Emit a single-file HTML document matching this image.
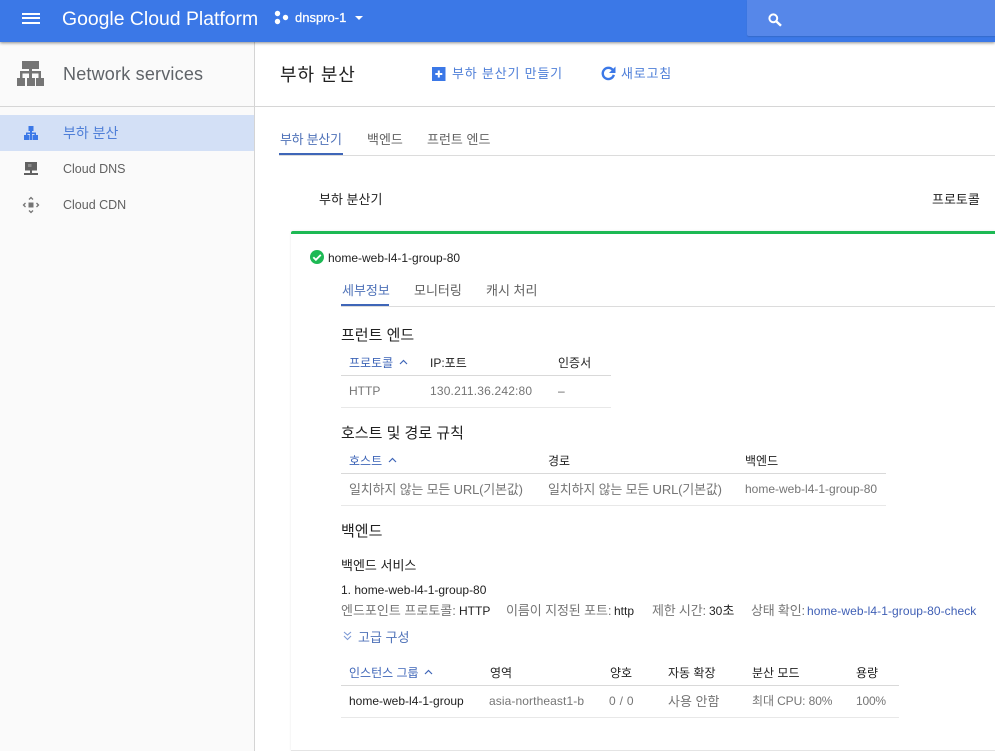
<!DOCTYPE html>
<html lang="ko"><head><meta charset="utf-8"><title>Network services</title>
<style>
html,body{margin:0;padding:0;background:#fff}
#p{position:relative;width:995px;height:751px;overflow:hidden;background:#fff;font-family:"Liberation Sans","Noto Sans CJK KR",sans-serif;font-size:12px;color:#757575}
.t{position:absolute;white-space:nowrap;line-height:16px}
.r{position:absolute}
.k{color:#212121}.b{color:#3f66b8}
.h{font-size:13px}
.s{font-size:15px}
.th{font-size:12px}
.v{font-size:12px}
svg{position:absolute;display:block}
</style></head><body><div id="p">
<div class="r" style="left:0;top:107px;width:254px;height:644px;background:#fafafa"></div>
<div class="r" style="left:0;top:42px;width:254px;height:65px;background:#fafafa"></div>
<div class="r" style="left:254px;top:42px;width:1px;height:709px;background:#d4d4d4"></div>
<div class="r" style="left:0;top:106px;width:995px;height:1px;background:#d6d6d6"></div>
<div class="r" style="left:0;top:115px;width:254px;height:36px;background:#d3e0f6"></div>

<div class="r" style="left:0;top:0;width:995px;height:42px;background:#3b78e7;box-shadow:0 1px 3px rgba(0,0,0,.45)"></div>
<div class="r" style="left:747px;top:0;width:248px;height:36px;background:#5687e9;border-radius:0 0 0 2px;box-shadow:0 1px 1px rgba(0,0,0,.12)"></div>
<div class="r" style="left:22px;top:13px;width:18px;height:2px;background:#fff"></div>
<div class="r" style="left:22px;top:17px;width:18px;height:2px;background:#fff"></div>
<div class="r" style="left:22px;top:22px;width:18px;height:2px;background:#fff"></div>
<div class="t" style="left:62px;top:8px;font-size:19.4px;line-height:22px;color:#fff">Google Cloud Platform</div>
<svg style="left:274px;top:10px" width="16" height="16" viewBox="0 0 16 16" fill="#fff"><circle cx="3.5" cy="3.5" r="2.700"/><circle cx="3.5" cy="11.500" r="2.700"/><circle cx="11.500" cy="7.500" r="2.700"/></svg>
<div class="t" style="left:295px;top:10px;font-size:13px;color:#fff;-webkit-text-stroke:.25px #fff">dnspro-1</div>
<svg style="left:354px;top:15px" width="10" height="6" viewBox="0 0 10 6" fill="#fff"><path d="M1 1h8L5 5z"/></svg>
<svg style="left:768px;top:13px" width="15" height="14" viewBox="0 0 15 14" fill="none" stroke="#fff"><circle cx="5.300" cy="5.300" r="3.900" stroke-width="2"/><path d="M8.200 8.200L13 12.800" stroke-width="2.400"/></svg>

<svg style="left:17px;top:61px" width="27" height="25" viewBox="0 0 27 25" fill="#757575"><path d="M5 0h17v8H5zM12 8h3v2h-3zM3 10h21v2.500H3zM3 12.500h2.500V17H3zM12 12.500h3V17h-3zM21.500 12.500H24V17h-2.500zM0 17h8v8H0zM10 17h8v8h-8zM19 17h8v8h-8z"/></svg>
<div class="t" style="left:63px;top:62px;font-size:18px;line-height:24px;color:#5f6368;letter-spacing:.2px">Network services</div>

<svg style="left:24px;top:126px" width="14" height="14" viewBox="0 0 14 14" fill="#3b78e7"><path d="M4.500 0h5v5h-5zM6 5h2v9H6zM2 6.500h10V8H2zM2 8h1.500v1H2zM10.500 8H12v1h-1.500zM0 9h5.500v5H0zM8.500 9H14v5H8.500z"/></svg>
<div class="t" style="left:63px;top:125px;font-size:14px;color:#4f7fd8">부하 분산</div>
<svg style="left:24px;top:162px" width="14" height="14" viewBox="0 0 14 14" fill="#616161"><path d="M1 0h12v8.500H1zM6 8.500h2V11H6zM0 11h14v2H0z"/><path d="M4 2h3.500v3H4z" fill="#8a8a8a"/></svg>
<div class="t" style="left:63px;top:161px;color:#616161;font-size:12.500px">Cloud DNS</div>
<svg style="left:22px;top:196px" width="18" height="18" viewBox="0 0 18 18" fill="none" stroke="#757575" stroke-width="1.300"><rect x="6.500" y="6.500" width="5" height="5" fill="#757575" stroke="none"/><path d="M7 3.500L9 1.500 11 3.500M7 14.500L9 16.500 11 14.500M3.500 7L1.500 9 3.500 11M14.500 7L16.500 9 14.500 11"/></svg>
<div class="t" style="left:63px;top:197px;color:#616161;font-size:12.500px">Cloud CDN</div>

<div class="t" style="left:280px;top:63px;font-size:18px;line-height:24px;color:#212121;letter-spacing:.9px">부하 분산</div>
<svg style="left:432px;top:67px" width="14" height="14" viewBox="0 0 14 14"><rect width="13.500" height="14" fill="#3b78e7"/><path d="M5.800 3.500h2v2.500h2.500v2H7.800v2.500h-2V8H3.300V6h2.500z" fill="#fff"/></svg>
<div class="t h" style="left:452px;top:66px;color:#4f7fd8;letter-spacing:.8px">부하 분산기 만들기</div>
<svg style="left:601px;top:66px" width="15" height="15" viewBox="0 0 15 15" fill="none"><path d="M11.800 4A5.600 5.600 0 1 0 12.800 8.800" stroke="#3b78e7" stroke-width="2.400"/><path d="M14.500 .5v6.500H8z" fill="#3b78e7"/></svg>
<div class="t h" style="left:621px;top:66px;color:#4f7fd8;letter-spacing:.8px">새로고침</div>

<div class="t h" style="left:280px;top:132px;color:#4f72b8;letter-spacing:-.3px">부하 분산기</div>
<div class="r" style="left:279px;top:153px;width:64px;height:2px;background:#3f66b8"></div>
<div class="r" style="left:279px;top:155px;width:716px;height:1px;background:#dcdcdc"></div>
<div class="t h" style="left:367px;top:132px;color:#616161">백엔드</div>
<div class="t h" style="left:427px;top:132px;color:#616161">프런트 엔드</div>
<div class="t k h" style="left:319px;top:192px">부하 분산기</div>
<div class="t k h" style="left:932px;top:192px">프로토콜</div>

<div class="r" style="left:291px;top:231px;width:704px;height:520px;border-radius:2px 0 0 0;box-shadow:0 0 2px rgba(0,0,0,.1)"></div>
<div class="r" style="left:291px;top:231px;width:704px;height:3px;background:#1db954;border-radius:2px 0 0 0"></div>
<div class="r" style="left:291px;top:750px;width:704px;height:1px;background:#e4e4e4"></div>
<svg style="left:310px;top:250px" width="14" height="14" viewBox="0 0 14 14"><circle cx="7" cy="7" r="7" fill="#1db954"/><path d="M3.300 7.200L5.900 9.800 10.800 4.900" fill="none" stroke="#fff" stroke-width="1.800"/></svg>
<div class="t k" style="left:328px;top:250px">home-web-l4-1-group-80</div>

<div class="t h" style="left:342px;top:283px;color:#4f72b8">세부정보</div>
<div class="t h" style="left:414px;top:283px;color:#616161">모니터링</div>
<div class="t h" style="left:486px;top:283px;color:#616161">캐시 처리</div>
<div class="r" style="left:341px;top:304px;width:48px;height:2px;background:#3f66b8"></div>
<div class="r" style="left:341px;top:306px;width:654px;height:1px;background:#dcdcdc"></div>

<div class="t k s" style="left:341px;top:328px">프런트 엔드</div>
<div class="t b th" style="left:349px;top:355px">프로토콜</div>
<svg style="left:399px;top:359px" width="9" height="6" viewBox="0 0 9 6" fill="none" stroke="#3f66b8" stroke-width="1.200"><path d="M1 5L4.500 1.500 8 5"/></svg>
<div class="t k th" style="left:430px;top:355px">IP:포트</div>
<div class="t k th" style="left:558px;top:355px">인증서</div>
<div class="r" style="left:341px;top:375px;width:270px;height:1px;background:#d9d9d9"></div>
<div class="t" style="left:349px;top:383px">HTTP</div>
<div class="t" style="left:430px;top:383px;letter-spacing:.18px">130.211.36.242:80</div>
<div class="t" style="left:558px;top:383px;color:#616161">–</div>
<div class="r" style="left:341px;top:407px;width:270px;height:1px;background:#e8e8e8"></div>

<div class="t k s" style="left:341px;top:426px">호스트 및 경로 규칙</div>
<div class="t b th" style="left:349px;top:453px">호스트</div>
<svg style="left:388px;top:457px" width="9" height="6" viewBox="0 0 9 6" fill="none" stroke="#3f66b8" stroke-width="1.200"><path d="M1 5L4.500 1.500 8 5"/></svg>
<div class="t k th" style="left:548px;top:453px">경로</div>
<div class="t k th" style="left:745px;top:453px">백엔드</div>
<div class="r" style="left:341px;top:473px;width:545px;height:1px;background:#d9d9d9"></div>
<div class="t h" style="left:349px;top:482px;letter-spacing:-.17px">일치하지 않는 모든 URL(기본값)</div>
<div class="t h" style="left:548px;top:482px;letter-spacing:-.17px">일치하지 않는 모든 URL(기본값)</div>
<div class="t" style="left:745px;top:481px">home-web-l4-1-group-80</div>
<div class="r" style="left:341px;top:505px;width:545px;height:1px;background:#e8e8e8"></div>

<div class="t k s" style="left:341px;top:524px">백엔드</div>
<div class="t k h" style="left:341px;top:558px">백엔드 서비스</div>
<div class="t k" style="left:341px;top:582px">1. home-web-l4-1-group-80</div>
<div class="t h" style="left:341px;top:603px">엔드포인트 프로토콜:</div>
<div class="t k" style="left:459px;top:603px">HTTP</div>
<div class="t h" style="left:506px;top:603px;letter-spacing:-.1px">이름이 지정된 포트:</div>
<div class="t k" style="left:614px;top:603px">http</div>
<div class="t h" style="left:652px;top:603px;letter-spacing:-.2px">제한 시간:</div>
<div class="t k" style="left:709px;top:603px">30<span class="h">초</span></div>
<div class="t h" style="left:751px;top:603px;letter-spacing:-.2px">상태 확인:</div>
<div class="t" style="left:807px;top:603px;color:#3f5fb5;letter-spacing:.07px">home-web-l4-1-group-80-check</div>

<svg style="left:343px;top:631px" width="9" height="10" viewBox="0 0 9 10" fill="none" stroke="#7d9ad6" stroke-width="1.100"><path d="M1 1L4.500 4 8 1M1 5L4.500 8.500 8 5"/></svg>
<div class="t h" style="left:358px;top:630px;color:#4f72b8">고급 구성</div>

<div class="t b th" style="left:349px;top:665px">인스턴스 그룹</div>
<svg style="left:424px;top:669px" width="9" height="6" viewBox="0 0 9 6" fill="none" stroke="#3f66b8" stroke-width="1.200"><path d="M1 5L4.500 1.500 8 5"/></svg>
<div class="t k th" style="left:490px;top:665px">영역</div>
<div class="t k th" style="left:610px;top:665px">양호</div>
<div class="t k th" style="left:668px;top:665px">자동 확장</div>
<div class="t k th" style="left:752px;top:665px">분산 모드</div>
<div class="t k th" style="left:856px;top:665px">용량</div>
<div class="r" style="left:341px;top:685px;width:558px;height:1px;background:#d9d9d9"></div>
<div class="t k" style="left:349px;top:693px">home-web-l4-1-group</div>
<div class="t" style="left:489px;top:693px;letter-spacing:.1px">asia-northeast1-b</div>
<div class="t" style="left:609px;top:693px;letter-spacing:.3px">0 / 0</div>
<div class="t h" style="left:668px;top:694px">사용 안함</div>
<div class="t" style="left:752px;top:693px;letter-spacing:-.1px">최대 CPU: 80%</div>
<div class="t" style="left:856px;top:693px;letter-spacing:-.2px">100%</div>
<div class="r" style="left:341px;top:717px;width:558px;height:1px;background:#e8e8e8"></div>
</div></body></html>
